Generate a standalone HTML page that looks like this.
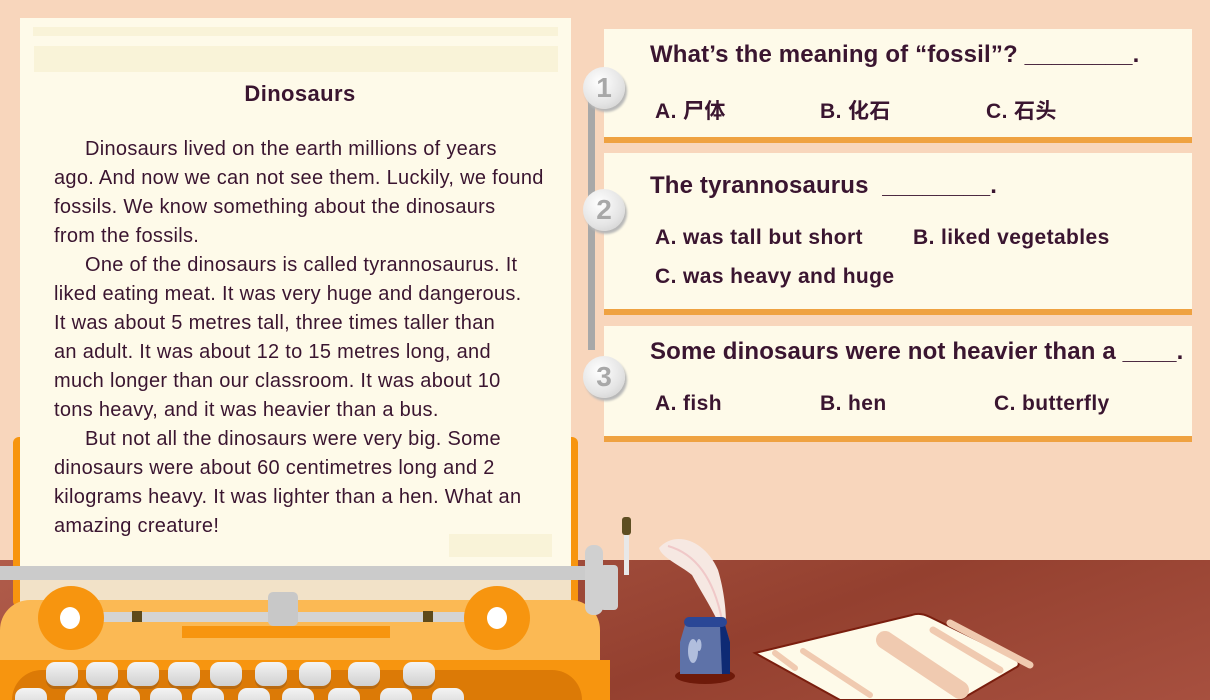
<!DOCTYPE html>
<html><head><meta charset="utf-8"><style>
*{margin:0;padding:0;box-sizing:border-box}
html{width:1210px;height:700px;overflow:hidden}
body{width:1210px;height:700px;overflow:hidden;background:#f8d6bc;position:relative;font-family:"Liberation Sans","Noto Sans CJK SC",sans-serif;color:#3a1530}
.abs{position:absolute}
.desk{left:0;top:560px;width:1210px;height:140px;background:linear-gradient(160deg,#b05c4b,#94402f 60%,#a7503f)}
.paper{left:20px;top:18px;width:551px;height:562px;background:#fefae9}
.line{position:absolute;left:54px;font-size:20px;white-space:nowrap;letter-spacing:0.3px}
.card{left:604px;width:588px;background:#fefae9;border-bottom:6px solid #efa241}
.q{position:absolute;left:46px;font-size:24px;font-weight:bold;white-space:nowrap;letter-spacing:0.15px}
.o{position:absolute;font-size:21px;font-weight:bold;white-space:nowrap;letter-spacing:0.4px}
.circ{left:583px;width:42px;height:42px;border-radius:50%;background:radial-gradient(circle at 40% 35%,#fff,#e4e4e4 60%,#c8c8c8);box-shadow:2px 3px 2px #b8b8b8;color:#a8a8a8;font-size:28px;font-weight:bold;text-align:center;line-height:42px}
.key{position:absolute;width:32px;height:24px;border-radius:9px;background:linear-gradient(#f4f4f4,#d0d0d0);box-shadow:0 3px 0 #b96a10}
</style></head><body>
<div class="abs desk"></div>
<div class="abs" style="left:13px;top:437px;width:565px;height:170px;background:#f7950f;border-radius:6px"></div>
<div class="abs paper"></div>
<div class="abs" style="left:33px;top:27px;width:525px;height:9px;background:#f9f3d8"></div>
<div class="abs" style="left:34px;top:46px;width:524px;height:26px;background:#f9f3d8"></div>
<div class="abs" style="left:449px;top:534px;width:103px;height:23px;background:#f9f3d8"></div>
<div class="abs" style="left:0;top:81px;width:600px;text-align:center;font-size:22px;font-weight:bold;letter-spacing:0.4px">Dinosaurs</div>
<div class="line" style="top:138px;left:85px">Dinosaurs lived on the earth millions of years</div>
<div class="line" style="top:167px">ago. And now we can not see them. Luckily, we found</div>
<div class="line" style="top:196px">fossils. We know something about the dinosaurs</div>
<div class="line" style="top:225px">from the fossils.</div>
<div class="line" style="top:254px;left:85px">One of the dinosaurs is called tyrannosaurus. It</div>
<div class="line" style="top:283px">liked eating meat. It was very huge and dangerous.</div>
<div class="line" style="top:312px">It was about 5 metres tall, three times taller than</div>
<div class="line" style="top:341px">an adult. It was about 12 to 15 metres long, and</div>
<div class="line" style="top:370px">much longer than our classroom. It was about 10</div>
<div class="line" style="top:399px">tons heavy, and it was heavier than a bus.</div>
<div class="line" style="top:428px;left:85px">But not all the dinosaurs were very big. Some</div>
<div class="line" style="top:457px">dinosaurs were about 60 centimetres long and 2</div>
<div class="line" style="top:486px">kilograms heavy. It was lighter than a hen. What an</div>
<div class="line" style="top:515px">amazing creature!</div>
<div class="abs" style="left:0;top:566px;width:592px;height:14px;background:#cbcbcb"></div>
<div class="abs" style="left:20px;top:580px;width:551px;height:22px;background:#f2e2c8"></div>
<div class="abs" style="left:0;top:600px;width:600px;height:100px;background:#fbb954;border-radius:30px 30px 0 0"></div>
<div class="abs" style="left:0;top:660px;width:610px;height:40px;background:#f7950f"></div>
<div class="abs" style="left:12px;top:670px;width:570px;height:30px;background:#dc7a06;border-radius:40px 40px 0 0"></div>
<div class="abs" style="left:75px;top:612px;width:450px;height:10px;background:#d4d4d4"></div>
<div class="abs" style="left:132px;top:611px;width:10px;height:11px;background:#5e4a1a"></div>
<div class="abs" style="left:423px;top:611px;width:10px;height:11px;background:#5e4a1a"></div>
<div class="abs" style="left:182px;top:626px;width:208px;height:12px;background:#f7950f"></div>
<div class="abs" style="left:268px;top:592px;width:30px;height:34px;background:#c8c8c8;border-radius:5px"></div>
<div class="abs" style="left:38px;top:586px;width:66px;height:64px;border-radius:50%;background:#f7950f"></div>
<div class="abs" style="left:60px;top:607px;width:20px;height:22px;border-radius:50%;background:#fff"></div>
<div class="abs" style="left:464px;top:586px;width:66px;height:64px;border-radius:50%;background:#f7950f"></div>
<div class="abs" style="left:487px;top:607px;width:20px;height:22px;border-radius:50%;background:#fff"></div>
<div class="abs" style="left:585px;top:545px;width:18px;height:70px;background:#d0d0d0;border-radius:8px"></div>
<div class="abs" style="left:622px;top:517px;width:9px;height:18px;background:#5e4e22;border-radius:3px"></div>
<div class="abs" style="left:624px;top:535px;width:5px;height:40px;background:#e8e8e8"></div>
<div class="abs" style="left:600px;top:565px;width:18px;height:45px;background:#d0d0d0;border-radius:4px"></div>
<div class="key" style="left:46px;top:662px"></div><div class="key" style="left:86px;top:662px"></div><div class="key" style="left:127px;top:662px"></div><div class="key" style="left:168px;top:662px"></div><div class="key" style="left:210px;top:662px"></div><div class="key" style="left:255px;top:662px"></div><div class="key" style="left:299px;top:662px"></div><div class="key" style="left:348px;top:662px"></div><div class="key" style="left:403px;top:662px"></div>
<div class="key" style="left:15px;top:688px"></div><div class="key" style="left:65px;top:688px"></div><div class="key" style="left:108px;top:688px"></div><div class="key" style="left:150px;top:688px"></div><div class="key" style="left:192px;top:688px"></div><div class="key" style="left:238px;top:688px"></div><div class="key" style="left:282px;top:688px"></div><div class="key" style="left:328px;top:688px"></div><div class="key" style="left:380px;top:688px"></div><div class="key" style="left:432px;top:688px"></div>
<svg class="abs" style="left:640px;top:520px" width="570" height="180" viewBox="0 0 570 180">
<path d="M19 28 C35 10 65 20 78 50 C84 70 86 90 86 102 L78 102 C70 85 60 70 52 55 C40 45 22 38 19 28Z" fill="#f6e8e2"/>
<path d="M28 26 C60 35 75 65 82 100" stroke="#f0c8c8" stroke-width="2" fill="none"/>
<ellipse cx="65" cy="156" rx="30" ry="8" fill="#6e1a0a"/>
<path d="M45 105 L85 105 L90 122 L90 154 L40 154 L40 122Z" fill="#5e72a8"/>
<path d="M80 105 L85 105 L90 122 L90 154 L82 154Z" fill="#0e2a74"/>
<rect x="44" y="97" width="43" height="10" rx="5" fill="#2a4796"/>
<ellipse cx="53" cy="131" rx="5" ry="12" fill="#b1bedd"/>
<ellipse cx="59" cy="125" rx="2.5" ry="6" fill="#b1bedd"/>
<path d="M115 133 L272 95 Q280 92 290 97 L376 139 Q382 145 375 148 L320 180 L200 180 Z" fill="#fefae9" stroke="#7a1e0e" stroke-width="2"/>
<path d="M135 133 L155 148" stroke="#f0cab0" stroke-width="6" stroke-linecap="round"/>
<path d="M163 131 L230 175" stroke="#f0cab0" stroke-width="6" stroke-linecap="round"/>
<path d="M245 120 L320 170" stroke="#f0cab0" stroke-width="18" stroke-linecap="round"/>
<path d="M293 110 L360 150" stroke="#f0cab0" stroke-width="7" stroke-linecap="round"/>
<path d="M310 103 L390 145" stroke="#f0cab0" stroke-width="7" stroke-linecap="round"/>
</svg>
<div class="abs" style="left:588px;top:85px;width:7px;height:265px;background:#a8a8a8"></div>
<div class="abs card" style="top:29px;height:114px">
<div class="q" style="top:12px">What’s the meaning of “fossil”? ________.</div>
<div class="o" style="top:66px;left:51px">A. 尸体</div>
<div class="o" style="top:66px;left:216px">B. 化石</div>
<div class="o" style="top:66px;left:382px">C. 石头</div>
</div>
<div class="abs card" style="top:153px;height:162px">
<div class="q" style="top:19px">The tyrannosaurus &nbsp;________.</div>
<div class="o" style="top:73px;left:51px">A. was tall but short</div>
<div class="o" style="top:73px;left:309px">B. liked vegetables</div>
<div class="o" style="top:112px;left:51px">C. was heavy and huge</div>
</div>
<div class="abs card" style="top:326px;height:116px">
<div class="q" style="top:12px">Some dinosaurs were not heavier than a ____.</div>
<div class="o" style="top:66px;left:51px">A. fish</div>
<div class="o" style="top:66px;left:216px">B. hen</div>
<div class="o" style="top:66px;left:390px">C. butterfly</div>
</div>
<div class="abs circ" style="top:67px">1</div>
<div class="abs circ" style="top:189px">2</div>
<div class="abs circ" style="top:356px">3</div>
</body></html>
